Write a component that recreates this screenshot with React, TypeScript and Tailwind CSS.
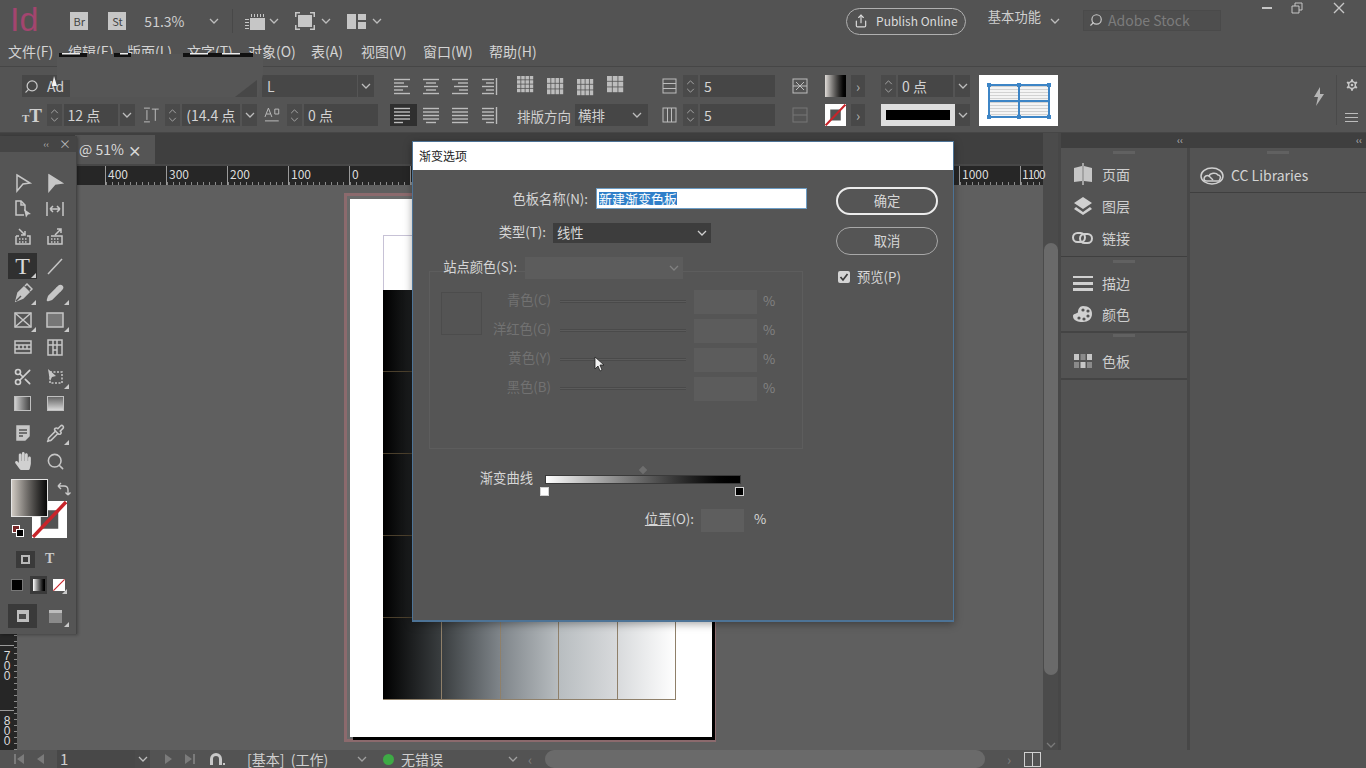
import { Search, Scissors, Pipette, Pencil, Share, Settings } from 'lucide-react';
import { FaHandPaper } from 'react-icons/fa';
import type { ReactNode } from 'react';

const Chevron = ({ className = 'text-[#bdbdbd]' }: { className?: string }) => (
  <svg width="10" height="6" viewBox="0 0 10 6" fill="none" stroke="currentColor" strokeWidth="1.3" className={className}>
    <path d="M1 1l4 4 4-4" />
  </svg>
);

const Spin = () => (
  <div className="flex h-[22px] w-[15px] shrink-0 flex-col items-center justify-center gap-[3px] bg-[#4a4a4a] text-[#b5b5b5]">
    <svg width="9" height="5" viewBox="0 0 10 6" fill="none" stroke="currentColor"><path d="M1 5l4-4 4 4" /></svg>
    <svg width="9" height="5" viewBox="0 0 10 6" fill="none" stroke="currentColor"><path d="M1 1l4 4 4-4" /></svg>
  </div>
);

const NumField = ({ value, className, chevron = false }: { value: string; className: string; chevron?: boolean }) => (
  <div className={`flex h-[22px] shrink-0 items-center gap-[2px] ${className}`}>
    <Spin />
    <div className="flex h-full flex-1 items-center overflow-hidden whitespace-nowrap bg-[#464646] pl-[4px] text-[14px] text-[#d4d4d4]">{value}</div>
    {chevron && (
      <div className="flex h-full w-[15px] items-center justify-center bg-[#484848]">
        <Chevron />
      </div>
    )}
  </div>
);

const Lines = ({ rows, active = false, spine = false }: { rows: [number, number][]; active?: boolean; spine?: boolean }) => (
  <div className="h-[22px] w-[29px] shrink-0">
    <div className={`flex h-[22px] w-[27px] items-center pl-[4px] ${active ? 'bg-[#2f2f2f]' : ''}`}>
      <svg width="17" height="17" viewBox="0 0 17 17" stroke="#bcbcbc" strokeWidth="1.4">
        {rows.map(([a, b], i) => (
          <line key={i} x1={a} x2={b} y1={1.5 + i * 3.5} y2={1.5 + i * 3.5} />
        ))}
        {spine && <line x1="15.500" x2="15.500" y1="0" y2="17" />}
      </svg>
    </div>
  </div>
);

const DotGrid = ({ rows, cols, className }: { rows: number; cols: number; className?: string }) => (
  <svg width="17" height="17" viewBox="0 0 17 17" fill="#bdbdbd" className={className}>
    {Array.from({ length: rows * cols }).map((_, i) => (
      <rect key={i} x={(i % cols) * (17 / cols)} y={Math.floor(i / cols) * (17 / rows)} width={17 / cols - 0.8} height={17 / rows - 0.8} />
    ))}
  </svg>
);

const Corner = () => (
  <svg width="5" height="5" viewBox="0 0 5 5" className="absolute bottom-[1px] right-[1px]" fill="#c9c9c9">
    <path d="M5 0v5H0z" />
  </svg>
);

const S = ({ children }: { children: ReactNode }) => (
  <svg width="20" height="20" viewBox="0 0 20 20" fill="none" stroke="#c6c6c6" strokeWidth="1.5">
    {children}
  </svg>
);

// white box with a dark centre and a red "none" slash
const NoneSwatch = ({ w, h, core = true }: { w: number; h: number; core?: boolean }) => (
  <svg width={w} height={h} viewBox="0 0 36 36" preserveAspectRatio="none">
    <rect width="36" height="36" fill="#ffffff" />
    {core && <rect x="9" y="9" width="18" height="18" fill="#535353" />}
    <path d="M1 35L35 1" stroke="#c8242a" strokeWidth="3.500" />
  </svg>
);

const tools: { a: ReactNode; b: ReactNode; ca?: boolean; cb?: boolean; on?: boolean; mt: string }[] = [
  {
    a: <S><path d="M4 2l13 8-7 1-6 7z" /></S>,
    b: <S><path d="M4 2l13 8-7 1-6 7z" fill="#c6c6c6" /></S>,
    mt: 'mt-[18px]',
  },
  {
    a: <S><path d="M12 12V6L8 2H3v14h8" /><path d="M8 2v4h4" /><path d="M11 10l7 5-3 .5-2 3z" fill="#c6c6c6" stroke="none" /></S>,
    b: <S><path d="M2 3v14M18 3v14M5 10h10M5 10l3-3M5 10l3 3M15 10l-3-3M15 10l-3 3" /></S>,
    mt: 'mt-0',
  },
  {
    a: <S><path d="M3 9v8h14V9h-3M3 9h3" /><path d="M6 2l6 6M12 4v4H8" /><path d="M6 12h8M6 15h8" strokeDasharray="1.5 1.5" /></S>,
    b: <S><path d="M3 9v8h14V9H6" /><path d="M10 8l6-6M12 2h4v4" /><path d="M6 12h8M6 15h8" strokeDasharray="1.5 1.5" /></S>,
    mt: 'mt-[2px]',
  },
  {
    a: <span className="font-['Liberation_Serif',serif] text-[24px] leading-none text-[#d8d8d8]">T</span>,
    b: <S><path d="M3 18L17 3" /></S>,
    ca: true,
    on: true,
    mt: 'mt-[3px]',
  },
  {
    a: <S><path d="M3 18l2-8 6-6 5 5-6 6z" fill="#c6c6c6" /><path d="M3 18l5-5" stroke="#535353" /><path d="M12 3l2-2 5 5-2 2" /></S>,
    b: <Pencil size={18} color="#c6c6c6" fill="#c6c6c6" />,
    ca: true,
    cb: true,
    mt: 'mt-px',
  },
  {
    a: <S><rect x="2" y="3" width="16" height="14" /><path d="M2 3l16 14M18 3L2 17" /></S>,
    b: <S><rect x="2" y="3" width="16" height="14" fill="#777777" /></S>,
    ca: true,
    cb: true,
    mt: 'mt-px',
  },
  {
    a: <S><rect x="2" y="4" width="16" height="12" /><path d="M2 8h16M2 12h16M6 8v4M10 8v4M14 8v4" /></S>,
    b: <S><rect x="3" y="3" width="14" height="15" /><path d="M8 3v15M12 3v15M8 8h4M8 13h4M3 8h5M12 8h5" /></S>,
    mt: 'mt-px',
  },
  {
    a: <Scissors size={20} color="#d0d0d0" />,
    b: <S><rect x="5" y="5" width="12" height="11" strokeDasharray="2 1.5" /><path d="M3 2l8 7-4 1-2 4z" fill="#c6c6c6" stroke="none" /></S>,
    cb: true,
    mt: 'mt-[4px]',
  },
  {
    a: <div className="h-[15px] w-[17px] border border-[#c0c0c0] bg-gradient-to-r from-[#d0d0d0] to-[#444444]" />,
    b: <div className="h-[15px] w-[17px] border border-[#c0c0c0] bg-gradient-to-b from-[#666666] to-[#d8d8d8]" />,
    mt: 'mt-0',
  },
  {
    a: <S><path d="M4 3h12v10l-4 4H4z" fill="#c6c6c6" /><path d="M6 7h8M6 10h8M6 13h4" stroke="#535353" /></S>,
    b: <Pipette size={19} color="#c6c6c6" />,
    cb: true,
    mt: 'mt-[4px]',
  },
  {
    a: <FaHandPaper size={18} color="#d0d0d0" />,
    b: <Search size={19} color="#c6c6c6" />,
    mt: 'mt-[2px]',
  },
];

const ToolPanel = () => (
  <div className="absolute left-0 top-[3px] z-10 h-[498px] w-[77px] border-r border-[#444444] bg-[#555555] shadow-[1px_1px_3px_rgba(0,0,0,0.3)]">
    <div className="flex h-[16px] items-center justify-end gap-[10px] bg-[#454545] pr-[5px] text-[#b8b8b8]">
      <span className="text-[9px] leading-none">‹‹</span>
      <span className="text-[12px] leading-none">×</span>
    </div>
    {tools.map((t, i) => (
      <div key={i} className={`flex h-[26px] pl-[8px] ${t.mt}`}>
        <div className={`relative flex h-[26px] w-[29px] items-center justify-center ${t.on ? 'bg-[#303030]' : ''}`}>
          {t.a}
          {t.ca && <Corner />}
        </div>
        <div className="relative ml-[3px] flex h-[26px] w-[30px] items-center justify-center">
          {t.b}
          {t.cb && <Corner />}
        </div>
      </div>
    ))}
    {/* fill and stroke swatches */}
    <div className="relative mt-[5px] h-[65px]">
      <div className="absolute left-[32px] top-[22px]">
        <NoneSwatch w={35} h={37} />
      </div>
      <div className="absolute left-[11px] top-0 h-[38px] w-[37px] border border-[#e4e4e4] bg-gradient-to-r from-[#cfc9c2] to-[#0a0a0a]" />
      <svg width="14" height="14" viewBox="0 0 14 14" fill="none" stroke="#c9c9c9" strokeWidth="1.4" className="absolute left-[57px] top-[3px]">
        <path d="M1 4l3-3M1 4l3 3M1 4h6q4 0 4 4v5M11 13l-2.500-2.500M11 13l2.500-2.500" />
      </svg>
      <div className="absolute left-[12px] top-[46px] h-[8px] w-[8px] border border-white bg-[#7a2a2a]" />
      <div className="absolute left-[16px] top-[50px] h-[8px] w-[8px] border border-white bg-black" />
    </div>
    <div className="mt-[6px] flex h-[18px] items-center pl-[16px]">
      <div className="flex h-[17px] w-[19px] items-center justify-center bg-[#3a3a3a]">
        <div className="h-[9px] w-[9px] border-2 border-[#b9b9b9]" />
      </div>
      <span className="ml-[10px] font-['Liberation_Serif',serif] text-[14px] font-bold leading-none text-[#c9c9c9]">T</span>
    </div>
    <div className="mt-[8px] flex h-[18px] items-center pl-[11px]">
      <div className="h-[12px] w-[12px] border border-[#777777] bg-black" />
      <div className="ml-[7px] flex h-[18px] w-[17px] items-center justify-center bg-[#3a3a3a]">
        <div className="h-[12px] w-[12px] bg-gradient-to-r from-white to-black" />
      </div>
      <div className="relative ml-[6px] h-[12px] w-[12px]">
        <NoneSwatch w={12} h={12} core={false} />
        <div className="absolute -bottom-[4px] -right-[3px]"><Corner /></div>
      </div>
    </div>
    <div className="mt-[10px] flex h-[24px] items-center pl-[8px]">
      <div className="flex h-[24px] w-[29px] items-center justify-center bg-[#3a3a3a]">
        <div className="flex h-[12px] w-[12px] items-center justify-center bg-[#bdbdbd]">
          <div className="h-[5px] w-[7px] bg-[#4a4a4a]" />
        </div>
      </div>
      <div className="relative ml-[3px] flex h-[24px] w-[30px] items-center justify-center">
        <div className="h-[13px] w-[13px] border-t-[3px] border-[#bdbdbd] bg-[#8a8a8a]" />
        <Corner />
      </div>
    </div>
  </div>
);

const rulerLabels = ['400', '300', '200', '100', '0', '100', '200', '300', '400', '500', '600', '700', '800', '900', '1000', '1100'];

const Guides = () => (
  <div className="grid h-[410px] w-[293px] grid-cols-[59px_59px_58px_59px_58px] grid-rows-5 bg-[linear-gradient(90deg,#000000_0%,#3a3e40_20%,#7f858a_40%,#b8bdc0_60%,#d8dadc_80%,#ffffff_100%)]">
    {Array.from({ length: 25 }).map((_, i) => (
      <div key={i} className={`${i >= 20 ? 'border-[#8f806a]' : 'border-[#4a3f2c]'} border-b border-r`} />
    ))}
  </div>
);

const Canvas = () => (
  <div className="relative flex min-w-0 flex-1 flex-col">
    <ToolPanel />
    <div className="flex h-[31px] shrink-0 items-end bg-[#3f3f3f] pl-[75px] pt-[2px]">
      <div className="flex h-full w-[80px] items-center gap-[4px] bg-[#555555] pl-[4px] text-[14px] text-[#d8d8d8]">
        <span>@ 51%</span>
        <span className="text-[14px] font-bold leading-none">×</span>
      </div>
    </div>
    <div className="mt-[2px] flex h-[19px] shrink-0 bg-[#262626] pl-[105px]">
      {rulerLabels.map((l, i) => (
        <div
          key={i}
          className={`relative h-full shrink-0 border-l border-[#9a9a9a] text-[12px] leading-[15px] text-[#dcdcdc] ${
            i === 15 ? 'w-[23px] pl-px text-[11px] tracking-[-1px]' : 'w-[61px] pl-[2px]'
          }`}
        >
          {l}
          <div className="absolute bottom-0 left-0 h-[3px] w-full bg-[repeating-linear-gradient(90deg,#8a8a8a_0_1px,transparent_1px_6px)]" />
        </div>
      ))}
    </div>
    <div className="flex min-h-0 flex-1">
      <div className="relative w-[17px] shrink-0 bg-[#262626]">
        <div className="absolute left-0 top-[460px] w-[14px] border-t border-[#9a9a9a] pt-[3px] font-['Liberation_Sans',sans-serif] text-[12px] leading-[14px] tracking-[-4px] text-[#dcdcdc] [text-orientation:upright] [writing-mode:vertical-rl]">
          700
        </div>
        <div className="absolute left-0 top-[525px] w-[14px] border-t border-[#9a9a9a] pt-[3px] font-['Liberation_Sans',sans-serif] text-[12px] leading-[14px] tracking-[-4px] text-[#dcdcdc] [text-orientation:upright] [writing-mode:vertical-rl]">
          800
        </div>
        <div className="absolute bottom-0 right-0 top-0 w-[3px] bg-[repeating-linear-gradient(180deg,#8a8a8a_0_1px,transparent_1px_6px)]" />
      </div>
      <div className="relative flex-1 bg-[#5f5f5f]">
        {/* the document page sits freely on the pasteboard */}
        <div className="absolute left-[327px] top-[8px] h-[549px] w-[372px] border-[3px] border-[#8c6a6d] bg-[#6a6a6a] p-[3px]">
          <div className="h-[538px] w-[362px] bg-white pl-[33px] pt-[36px] shadow-[3px_3px_0_#000000]">
            <div className="h-[55px] w-[293px] border border-b-0 border-[#c7c2d6]" />
            <Guides />
          </div>
        </div>
      </div>
    </div>
  </div>
);

const Scroll = () => (
  <div className="flex w-[15px] shrink-0 flex-col items-center bg-[#4b4b4b] pt-[110px]">
    <div className="h-[432px] w-[14px] rounded-full bg-[#6a6a6a]" />
    <div className="mt-auto pb-[2px]"><Chevron className="text-[#7a7a7a]" /></div>
  </div>
);

const DockItem = ({ icon, label, className = '' }: { icon: ReactNode; label: string; className?: string }) => (
  <div className={`flex h-[32px] items-center pl-[11px] text-[14px] text-[#cfcfcf] ${className}`}>
    <div className="flex w-[21px] justify-center">{icon}</div>
    <span className="ml-[9px]">{label}</span>
  </div>
);

const Grip = () => <div className="mx-auto h-[3px] w-[22px] bg-[#616161]" />;

const Docks = () => (
  <div className="ml-[3px] flex w-[305px] shrink-0 flex-col">
    <div className="flex h-[15px] shrink-0 bg-[#3f3f3f] text-[#b5b5b5]">
      <div className="w-[126px] pr-[4px] text-right text-[10px] leading-[13px]">‹‹</div>
      <div className="w-[179px] pr-[4px] text-right text-[10px] leading-[13px]">‹‹</div>
    </div>
    <div className="flex flex-1">
      <div className="w-[126px] bg-[#535353]">
        <div className="h-[109px] border-b border-[#3f3f3f] pt-[3px]">
          <Grip />
          <DockItem
            className="mt-[4px]"
            label="页面"
            icon={
              <svg width="20" height="22" viewBox="0 0 20 22" fill="#c6c6c6">
                <path d="M1 5l8-2v15l-8 1zM19 5l-8-2v15l8 1zM9.300 0h1.400v22H9.300z" />
              </svg>
            }
          />
          <DockItem
            label="图层"
            icon={
              <svg width="20" height="20" viewBox="0 0 20 20" fill="#d0d0d0">
                <path d="M10 1l9 6-9 6-9-6zM3 11l7 5 7-5 2 2-9 6-9-6z" />
              </svg>
            }
          />
          <DockItem
            label="链接"
            icon={
              <svg width="21" height="14" viewBox="0 0 21 14" fill="none" stroke="#d0d0d0" strokeWidth="2">
                <rect x="1" y="2" width="12" height="9" rx="4.500" />
                <rect x="8" y="3" width="12" height="9" rx="4.500" />
              </svg>
            }
          />
        </div>
        <div className="h-[76px] border-b-2 border-[#444444] pt-[3px]">
          <Grip />
          <DockItem
            className="mt-[4px]"
            label="描边"
            icon={
              <svg width="20" height="15" viewBox="0 0 20 15" fill="#d0d0d0">
                <rect width="20" height="2" />
                <rect y="6" width="20" height="3" />
                <rect y="12" width="20" height="3" />
              </svg>
            }
          />
          <DockItem
            className="-mt-[1px]"
            label="颜色"
            icon={
              <svg width="21" height="18" viewBox="0 0 21 18" fill="#d0d0d0">
                <path d="M11 1c6 0 9 3 9 8s-4 8-9 8c-6 0-10-2-10-6 0-3 5-2 5-4 0-3 2-6 5-6z" />
                <g fill="#535353">
                  <circle cx="7" cy="13" r="1.600" /><circle cx="12" cy="14" r="1.600" /><circle cx="16" cy="11" r="1.600" /><circle cx="16" cy="6" r="1.600" /><circle cx="11" cy="5" r="1.600" />
                </g>
              </svg>
            }
          />
        </div>
        <div className="h-[47px] border-b-2 border-[#444444] pt-[1px]">
          <Grip />
          <DockItem
            className="mt-[8px]"
            label="色板"
            icon={
              <svg width="18" height="14" viewBox="0 0 18 14" fill="#c6c6c6">
                <rect width="5" height="6" /><rect x="6.500" width="5" height="6" fill="#8a8a8a" /><rect x="13" width="5" height="6" />
                <rect y="8" width="5" height="6" fill="#8a8a8a" /><rect x="6.500" y="8" width="5" height="6" /><rect x="13" y="8" width="5" height="6" fill="#8a8a8a" />
              </svg>
            }
          />
        </div>
      </div>
      <div className="ml-[3px] flex-1 bg-[#535353]">
        <div className="h-[45px] border-b border-[#3f3f3f] pt-[3px]">
          <Grip />
          <div className="mt-[11px] flex items-center pl-[10px] text-[14px] text-[#d4d4d4]">
            <svg width="24" height="18" viewBox="0 0 24 18" fill="none" stroke="#d0d0d0" strokeWidth="1.500">
              <ellipse cx="12" cy="9" rx="11" ry="8" />
              <path d="M4 12c0-3 3-4 5-3 1-3 7-4 9-1 2 0 3 2 2 4l-1 2H7c-2 0-3-1-3-2z" />
              <path d="M9 9l4 4" />
            </svg>
            <span className="ml-[7px]">CC Libraries</span>
          </div>
        </div>
      </div>
    </div>
  </div>
);

const StatusBar = () => (
  <div className="flex h-[18px] shrink-0 items-center bg-[#535353] text-[14px] text-[#cfcfcf]">
    <svg width="10" height="10" viewBox="0 0 10 10" fill="#7b7b7b" className="ml-[14px]"><path d="M0 0h2v10H0zM10 0v10L3 5z" /></svg>
    <svg width="7" height="10" viewBox="0 0 7 10" fill="#7b7b7b" className="ml-[13px]"><path d="M7 0v10L0 5z" /></svg>
    <div className="ml-[13px] flex h-full w-[78px] items-center bg-[#484848] pl-[3px] text-[15px]">1</div>
    <div className="flex h-full w-[15px] items-center justify-center bg-[#4a4a4a]"><Chevron /></div>
    <svg width="7" height="10" viewBox="0 0 7 10" fill="#7b7b7b" className="ml-[15px]"><path d="M0 0v10l7-5z" /></svg>
    <svg width="10" height="10" viewBox="0 0 10 10" fill="#7b7b7b" className="ml-[13px]"><path d="M10 0H8v10h2zM0 0v10l7-5z" /></svg>
    <svg width="16" height="14" viewBox="0 0 16 14" fill="#c8c8c8" className="ml-[14px]">
      <path d="M1 13V7a6 6 0 0 1 12 0v6h-3V7a3 3 0 0 0-6 0v6z" /><rect x="14" y="11" width="2" height="2" />
    </svg>
    <span className="ml-[22px] w-[110px] whitespace-nowrap">[基本]&nbsp;&nbsp;(工作)</span>
    <Chevron className="text-[#a0a0a0]" />
    <div className="ml-[16px] h-[11px] w-[11px] rounded-full bg-[#3eaa45]" />
    <span className="ml-[7px] w-[107px]">无错误</span>
    <Chevron className="text-[#a0a0a0]" />
    <span className="ml-[10px] w-[11px] text-[#808080]">‹</span>
    <div className="ml-[6px] h-full w-[440px] rounded-full bg-[#6a6a6a]" />
    <span className="ml-[22px] w-[8px] text-[#808080]">›</span>
    <div className="ml-[9px] flex h-[15px] w-[17px] border border-[#d0d0d0]"><div className="h-full w-[8px] border-r border-[#d0d0d0]" /></div>
  </div>
);

const GhostRow = ({ label }: { label: string }) => (
  <div className="flex h-[24px] items-center">
    <span className="w-[69px] whitespace-nowrap pb-[4px] text-right text-[13.300px] text-[#727272]">{label}</span>
    <div className="ml-[9px] h-[3px] w-[126px] border-y border-[#4a4a4a] bg-[#5b5b5b]" />
    <div className="ml-[8px] h-[24px] w-[63px] bg-[#5c5c5c]" />
    <span className="ml-[6px] pb-[2px] text-[13.300px] text-[#828282]">%</span>
  </div>
);

const GradientDialog = () => (
  <div className="absolute left-[412px] top-[141px] z-20 h-[481px] w-[542px] border border-b-2 border-[#4d7396] bg-[#555555] shadow-[0_2px_8px_rgba(0,0,0,0.35)]">
    <div className="flex h-[28px] items-center bg-white pl-[6px] text-[12px] text-[#222222]">渐变选项</div>
    <div className="flex text-[13.300px] text-[#d6d6d6]">
      <div className="w-[423px] shrink-0">
        <div className="mt-[18px] flex items-center">
          <span className="w-[175px] text-right">色板名称(N):</span>
          <div className="ml-[8px] flex h-[21px] w-[211px] items-center border border-[#6c9cc4] bg-white pl-[2px] text-[13px] leading-none">
            <span className="bg-[#2f7fc9] text-white">新建渐变色板</span>
          </div>
        </div>
        <div className="mt-[13px] flex items-center">
          <span className="w-[133px] pb-[2px] text-right">类型(T):</span>
          <div className="ml-[7px] flex h-[20px] w-[158px] items-center justify-between bg-[#3d3d3d] px-[4px]">
            线性
            <Chevron className="text-[#cfcfcf]" />
          </div>
        </div>
        <div className="relative z-10 mt-[13px] flex items-center">
          <span className="w-[104px] pb-[2px] text-right">站点颜色(S):</span>
          <div className="ml-[8px] flex h-[22px] w-[158px] items-center justify-end bg-[#5c5c5c] px-[4px]">
            <Chevron className="text-[#808080]" />
          </div>
        </div>
        <div className="-mt-[8px] ml-[16px] flex h-[178px] w-[374px] border border-[#5d5d5d] pl-[11px] pt-[18px]">
          <div className="mt-[2px] h-[43px] w-[41px] border border-[#4c4c4c] bg-[#545454]" />
          <div className="flex flex-col gap-[5px]">
            <GhostRow label="青色(C)" />
            <GhostRow label="洋红色(G)" />
            <GhostRow label="黄色(Y)" />
            <GhostRow label="黑色(B)" />
          </div>
        </div>
        <div className="mt-[26px] flex h-[9px] items-center">
          <span className="w-[120px] whitespace-nowrap pb-[2px] text-right">渐变曲线</span>
          <div className="relative ml-[12px] h-[9px] w-[196px] border border-[#3a3a3a] bg-gradient-to-r from-white to-black">
            <div className="absolute -top-[9px] left-[94px] h-[6px] w-[6px] rotate-45 bg-[#6e6e6e]" />
            <div className="absolute -left-[6px] top-[11px] h-[9px] w-[9px] border border-[#d0d0d0] bg-white" />
            <div className="absolute -right-[4px] top-[11px] h-[9px] w-[9px] border border-[#d0d0d0] bg-black" />
          </div>
        </div>
        <div className="mt-[25px] flex items-center">
          <span className="w-[281px] pb-[2px] text-right"><u>位置</u>(O):</span>
          <div className="ml-[7px] h-[23px] w-[43px] bg-[#5e5e5e]" />
          <span className="ml-[10px] pb-[2px]">%</span>
        </div>
      </div>
      <div className="flex w-[102px] flex-col">
        <div className="mt-[17px] flex h-[28px] items-center justify-center rounded-full border-2 border-[#ececec]">确定</div>
        <div className="mt-[12px] flex h-[28px] items-center justify-center rounded-full border border-[#a8a8a8]">取消</div>
        <div className="mt-[12px] flex items-center pl-[2px]">
          <div className="flex h-[12px] w-[12px] items-center justify-center rounded-[2px] bg-[#d4d4d4]">
            <svg width="10" height="10" viewBox="0 0 10 10" fill="none" stroke="#3a3a3a" strokeWidth="1.700"><path d="M1.500 5l2.500 3 4.500-6" /></svg>
          </div>
          <span className="ml-[7px] whitespace-nowrap">预览(P)</span>
        </div>
      </div>
    </div>
    <svg width="12" height="16" viewBox="0 0 12 16" className="absolute left-[181px] top-[214px]">
      <path d="M1 1v12l3-3 2 5 2-1-2-5h4z" fill="#f2f2f2" stroke="#222222" strokeWidth="0.800" />
    </svg>
  </div>
);

const ControlPanel = () => (
  <div className="flex h-[67px] shrink-0 border-y border-[#464646] bg-[#545454] pl-[22px] pt-[8px]">
    <div className="flex w-[356px] shrink-0 flex-col gap-[7px]">
      <div className="flex">
        <div className="flex h-[22px] w-[233px] items-center gap-[1px] bg-[#474747] pl-[2px] text-[14px] text-[#cfcfcf]">
          <Search size={15} color="#c9c9c9" className="-scale-x-100" />
          <span className="ml-[7px]">Ad</span>
        </div>
        <div className="ml-[7px] flex h-[22px] w-[112px] items-center bg-[#474747] pl-[5px] text-[14px] text-[#d0d0d0]">
          L
          <div className="ml-auto flex h-full w-[17px] items-center justify-center border-l border-[#555555]"><Chevron /></div>
        </div>
      </div>
      <div className="flex items-center">
        <div className="flex w-[25px] items-baseline font-['Liberation_Serif',serif] font-bold leading-none text-[#cfcfcf]">
          <span className="text-[11px]">T</span><span className="text-[19px]">T</span>
        </div>
        <NumField value="12 点" chevron className="w-[88px]" />
        <svg width="17" height="20" viewBox="0 0 17 20" fill="none" stroke="#bcbcbc" className="ml-[8px]">
          <path d="M1 3h6M1 17h6M4 5v10M9 4h7M12.500 4v12" />
        </svg>
        <NumField value="(14.4 点" chevron className="ml-[6px] w-[92px]" />
        <svg width="16" height="20" viewBox="0 0 16 20" fill="none" stroke="#bcbcbc" className="ml-[7px]">
          <path d="M1 12l3.500-9L8 12M2.500 9h4M1 16h14M11 4h4v5h-4z" />
        </svg>
        <NumField value="0 点" className="ml-[7px] w-[91px]" />
      </div>
    </div>
    <div className="ml-[12px] flex w-[107px] shrink-0 flex-col gap-[7px]">
      <div className="flex">
        <Lines rows={[[0, 16], [0, 10], [0, 14], [0, 9], [0, 16]]} />
        <Lines rows={[[0, 16], [3, 13], [1, 15], [3, 13], [0, 16]]} />
        <Lines rows={[[0, 16], [6, 16], [2, 16], [7, 16], [0, 16]]} />
        <Lines spine rows={[[1, 13], [5, 13], [1, 13], [5, 13], [1, 13]]} />
      </div>
      <div className="flex">
        <Lines active rows={[[0, 16], [0, 16], [0, 16], [0, 16], [0, 9]]} />
        <Lines rows={[[0, 16], [0, 16], [0, 16], [0, 16], [3, 13]]} />
        <Lines rows={[[0, 16], [0, 16], [0, 16], [0, 16], [0, 16]]} />
        <Lines spine rows={[[1, 13], [1, 13], [1, 13], [1, 13], [5, 13]]} />
      </div>
    </div>
    <div className="ml-[20px] flex w-[131px] shrink-0 flex-col gap-[7px]">
      <div className="flex h-[22px] items-center gap-[13px]">
        <DotGrid rows={4} cols={4} className="-mt-[4px]" />
        <DotGrid rows={3} cols={4} />
        <DotGrid rows={3} cols={4} className="mt-[2px]" />
        <DotGrid rows={3} cols={3} className="-mt-[3px]" />
      </div>
      <div className="flex items-center text-[13.500px] text-[#d0d0d0]">
        <span className="w-[58px] whitespace-nowrap pt-[2px]">排版方向</span>
        <div className="flex h-[22px] w-[73px] items-center justify-between bg-[#464646] pl-[3px] pr-[6px]">
          横排
          <Chevron />
        </div>
      </div>
    </div>
    <div className="ml-[14px] flex w-[113px] shrink-0 flex-col gap-[7px]">
      <div className="flex items-center">
        <div className="w-[21px]">
          <svg width="15" height="16" viewBox="0 0 15 16" fill="none" stroke="#bcbcbc"><rect x="1" y="1" width="13" height="14" /><path d="M1 5.500h13M1 10.500h13" /></svg>
        </div>
        <NumField value="5" className="w-[92px]" />
      </div>
      <div className="flex items-center">
        <div className="w-[21px]">
          <svg width="15" height="16" viewBox="0 0 15 16" fill="none" stroke="#bcbcbc"><rect x="1" y="1" width="13" height="14" /><path d="M5.500 1v14M9.500 1v14" /></svg>
        </div>
        <NumField value="5" className="w-[92px]" />
      </div>
    </div>
    <div className="ml-[17px] flex w-[16px] shrink-0 flex-col gap-[7px]">
      <div className="flex h-[22px] items-center justify-center">
        <svg width="16" height="16" viewBox="0 0 16 16" fill="none" stroke="#bcbcbc"><rect x="1" y="1" width="14" height="14" /><path d="M4 4l8 8M12 4l-8 8M1 8h14" /></svg>
      </div>
      <div className="flex h-[22px] items-center justify-center">
        <svg width="16" height="16" viewBox="0 0 16 16" fill="none" stroke="#767676"><rect x="1" y="1" width="14" height="14" /><path d="M1 8h14" /></svg>
      </div>
    </div>
    <div className="ml-[17px] flex w-[40px] shrink-0 flex-col gap-[7px]">
      <div className="flex">
        <div className="h-[22px] w-[21px] bg-gradient-to-r from-[#e0dcd8] to-black" />
        <div className="ml-[5px] flex h-[22px] w-[14px] items-center justify-center bg-[#484848] text-[14px] leading-none text-[#b5b5b5]">›</div>
      </div>
      <div className="flex">
        <div className="h-[22px] w-[21px]">
          <NoneSwatch w={21} h={22} />
        </div>
        <div className="ml-[5px] flex h-[22px] w-[14px] items-center justify-center bg-[#484848] text-[14px] leading-none text-[#b5b5b5]">›</div>
      </div>
    </div>
    <div className="ml-[16px] flex w-[89px] shrink-0 flex-col gap-[7px]">
      <NumField value="0 点" chevron className="w-[89px]" />
      <div className="flex">
        <div className="flex h-[22px] w-[74px] items-center bg-[#dedede] px-[5px]">
          <div className="h-[10px] w-full bg-black" />
        </div>
        <div className="flex h-[22px] w-[15px] items-center justify-center bg-[#484848]"><Chevron /></div>
      </div>
    </div>
    <div className="ml-[9px] flex h-[51px] w-[79px] shrink-0 items-center justify-center bg-white">
      <div className="relative grid h-[34px] w-[62px] grid-cols-2 grid-rows-2 border border-[#3d85c6]">
        {[0, 1, 2, 3].map((i) => (
          <div key={i} className="border border-[#3d85c6] bg-[repeating-linear-gradient(180deg,#d2d2d2_0_1px,#f4f4f4_1px_3px)]" />
        ))}
        <div className="absolute -left-[2px] -top-[2px] h-[4px] w-[4px] bg-[#3d85c6]" />
        <div className="absolute -top-[2px] left-[28px] h-[4px] w-[4px] bg-[#3d85c6]" />
        <div className="absolute -right-[2px] -top-[2px] h-[4px] w-[4px] bg-[#3d85c6]" />
        <div className="absolute -bottom-[2px] -left-[2px] h-[4px] w-[4px] bg-[#3d85c6]" />
        <div className="absolute -bottom-[2px] left-[28px] h-[4px] w-[4px] bg-[#3d85c6]" />
        <div className="absolute -bottom-[2px] -right-[2px] h-[4px] w-[4px] bg-[#3d85c6]" />
      </div>
    </div>
    <div className="ml-auto flex items-start">
      <svg width="12" height="20" viewBox="0 0 12 20" fill="#b5b5b5" className="mt-[12px]"><path d="M7 0L1 10h4l-2 9 8-12H7z" /></svg>
      <div className="ml-[11px] flex h-[50px] w-[30px] flex-col items-center justify-between border-l border-[#4a4a4a] pt-[2px] text-[#c6c6c6]">
        <Settings size={16} color="#535353" fill="#c6c6c6" />
        <div className="mb-[3px] flex w-[13px] flex-col gap-[3px]">
          <div className="h-px bg-[#bcbcbc]" /><div className="h-px bg-[#bcbcbc]" /><div className="h-px bg-[#bcbcbc]" />
        </div>
      </div>
    </div>
  </div>
);

const menu: [string, string][] = [
  ['文件(F)', 'w-[60px]'],
  ['编辑(E)', 'w-[59px]'],
  ['版面(L)', 'w-[60px]'],
  ['文字(T)', 'w-[61px]'],
  ['对象(O)', 'w-[63px]'],
  ['表(A)', 'w-[50px]'],
  ['视图(V)', 'w-[62px]'],
  ['窗口(W)', 'w-[66px]'],
  ['帮助(H)', 'w-[60px]'],
];

const TopBar = () => (
  <div className="flex h-[36px] shrink-0 items-center bg-[#535353] pt-[6px] text-[#cfcfcf]">
    <span className="-mt-[6px] ml-[10px] self-start font-['Liberation_Sans',sans-serif] text-[34px] leading-[39px] text-[#a3456f]">Id</span>
    <div className="ml-[32px] flex h-[18px] w-[18px] items-center justify-center bg-[#c6c6c6] text-[11px] text-[#444444]">Br</div>
    <div className="ml-[20px] flex h-[18px] w-[18px] items-center justify-center bg-[#c6c6c6] text-[11px] text-[#444444]">St</div>
    <span className="ml-[18px] w-[38px] text-[14px]">51.3%</span>
    <div className="ml-[27px]"><Chevron /></div>
    <div className="ml-[13px] h-[24px] w-px bg-[#484848]" />
    <svg width="20" height="18" viewBox="0 0 20 18" fill="#c6c6c6" className="ml-[12px]">
      <rect x="5" y="6" width="15" height="12" />
      <path d="M6 2h1v3H6zM9 2h1v3H9zM12 2h1v3h-1zM15 2h1v3h-1zM18 2h1v3h-1zM0 7h4v1H0zM0 10h4v1H0zM0 13h4v1H0zM0 16h4v1H0z" />
    </svg>
    <div className="ml-[4px]"><Chevron /></div>
    <svg width="20" height="18" viewBox="0 0 20 18" fill="#c6c6c6" className="ml-[16px]">
      <rect x="3" y="3" width="14" height="12" />
      <path d="M0 0h5v1.500H1.500V5H0zM20 0h-5v1.500h3.500V5H20zM0 18h5v-1.500H1.500V13H0zM20 18h-5v-1.500h3.500V13H20z" />
    </svg>
    <div className="ml-[6px]"><Chevron /></div>
    <div className="ml-[16px] grid h-[15px] w-[19px] grid-cols-2 gap-[2px]">
      <div className="row-span-2 bg-[#c6c6c6]" /><div className="bg-[#c6c6c6]" /><div className="bg-[#c6c6c6]" />
    </div>
    <div className="ml-[6px]"><Chevron /></div>
    <div className="ml-auto flex h-[27px] w-[120px] items-center justify-center gap-[8px] rounded-full border border-[#b0b0b0] text-[12px] text-[#dcdcdc]">
      <Share size={14} />
      Publish Online
    </div>
    <span className="-mt-[8px] ml-[22px] text-[13.300px]">基本功能</span>
    <div className="ml-[9px]"><Chevron /></div>
    <div className="-mt-[2px] ml-[23px] flex h-[21px] w-[138px] items-center border border-[#4a4a4a] bg-[#4e4e4e] pl-[5px] text-[14px] text-[#7c7c7c]">
      <Search size={14} color="#c9c9c9" className="-scale-x-100" />
      <span className="ml-[5px]">Adobe Stock</span>
    </div>
    <div className="mb-[26px] ml-[41px] flex w-[85px] items-center text-[#cfcfcf]">
      <div className="h-[2px] w-[10px] bg-[#c6c6c6]" />
      <svg width="12" height="12" viewBox="0 0 12 12" fill="none" stroke="#c6c6c6" className="ml-[19px]"><path d="M1 4h7v7H1zM4 4V1h7v7H8" /></svg>
      <svg width="12" height="12" viewBox="0 0 12 12" fill="none" stroke="#c6c6c6" strokeWidth="1.400" className="ml-[30px]"><path d="M1 1l10 10M11 1L1 11" /></svg>
    </div>
    <div className="w-[19px]" />
  </div>
);

export default function App() {
  return (
    <div className="relative flex h-[768px] w-[1366px] flex-col overflow-hidden bg-[#535353] font-['Noto_Sans_CJK_SC',sans-serif]">
      <TopBar />
      <div className="flex h-[30px] shrink-0 items-center bg-[#535353] pl-[8px] text-[14px] text-[#d4d4d4]">
        {menu.map(([label, w]) => (
          <span key={label} className={w}>{label}</span>
        ))}
      </div>
      <ControlPanel />
      {/* video glitch over the menu and font field */}
      <svg width="270" height="50" viewBox="0 0 270 50" className="absolute left-0 top-[50px] z-10">
        <path d="M57 4h206v20l-5 23H70V30H57z" fill="#565656" />
        <path d="M235 47h22V30z" fill="#474747" />
        <path d="M59 3h28v4H59zM114 3h17v4h-17zM183 3h70v4h-70z" fill="#111111" />
        <path d="M62 3h18v1.500H62zM120 3h8v1.500h-8zM190 3h18v1.500h-18zM222 3h18v1.500h-18z" fill="#eeeeee" />
        <path d="M52 36l2-10 3 10z" fill="#f4f4f4" />
      </svg>
      <div className="flex min-h-0 flex-1 bg-[#474747]">
        <Canvas />
        <Scroll />
        <Docks />
      </div>
      <StatusBar />
      <GradientDialog />
    </div>
  );
}
